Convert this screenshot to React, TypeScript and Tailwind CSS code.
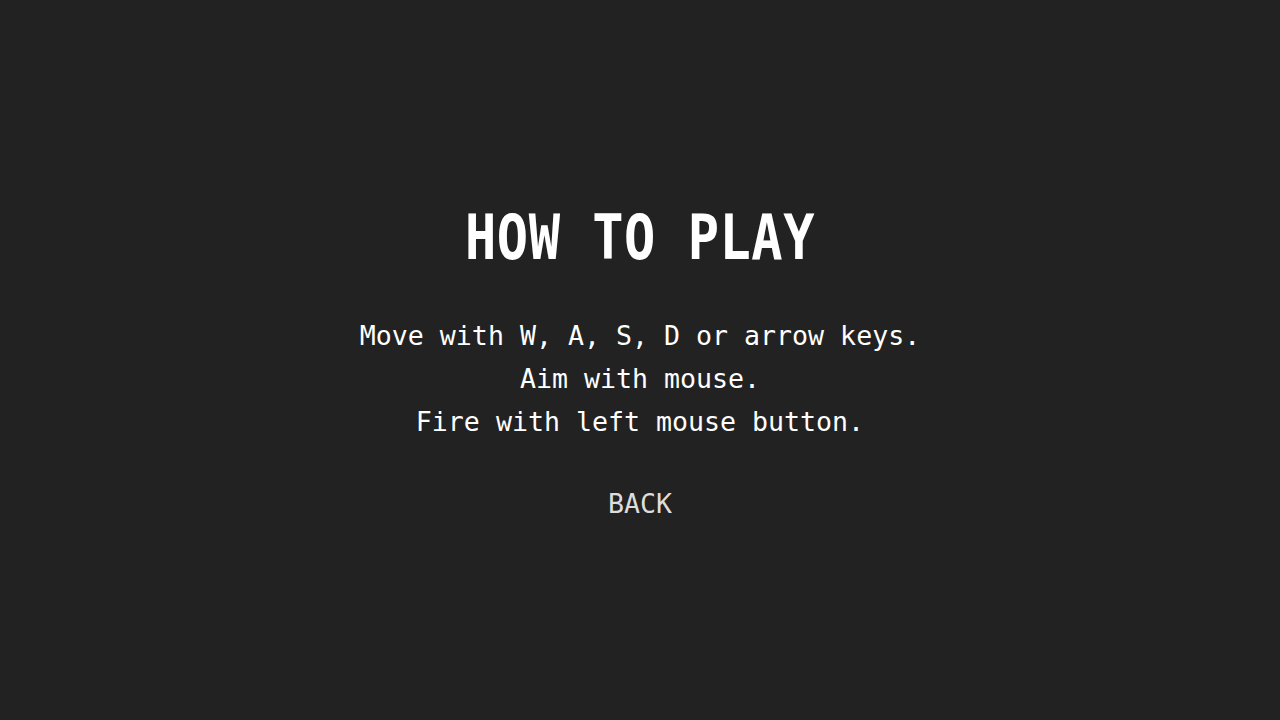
import React from 'react'

const lines = [
  'Move with W, A, S, D or arrow keys.',
  'Aim with mouse.',
  'Fire with left mouse button.',
]

const App: React.FC = () => {
  return (
    <div
      className="w-full min-h-screen bg-[#222222] flex flex-col items-center justify-center pt-3 text-white"
      style={{ fontFamily: '"DejaVu Sans Mono", "Liberation Mono", monospace' }}
    >
      {/* Title */}
      <h1 className="text-[52px] leading-[60px] font-bold tracking-[0.5px] scale-y-[1.2]">HOW TO PLAY</h1>

      {/* Controls */}
      <div className="mt-[47px] flex flex-col items-center">
        {lines.map((line, index) => (
          <p key={index} className="text-[26.6px] leading-[43px] whitespace-pre">
            {line}
          </p>
        ))}
      </div>

      {/* Back button */}
      <button className="mt-[39px] text-[26.6px] leading-[43px] text-[#dddddd] cursor-pointer">BACK</button>
    </div>
  )
}

export default App
